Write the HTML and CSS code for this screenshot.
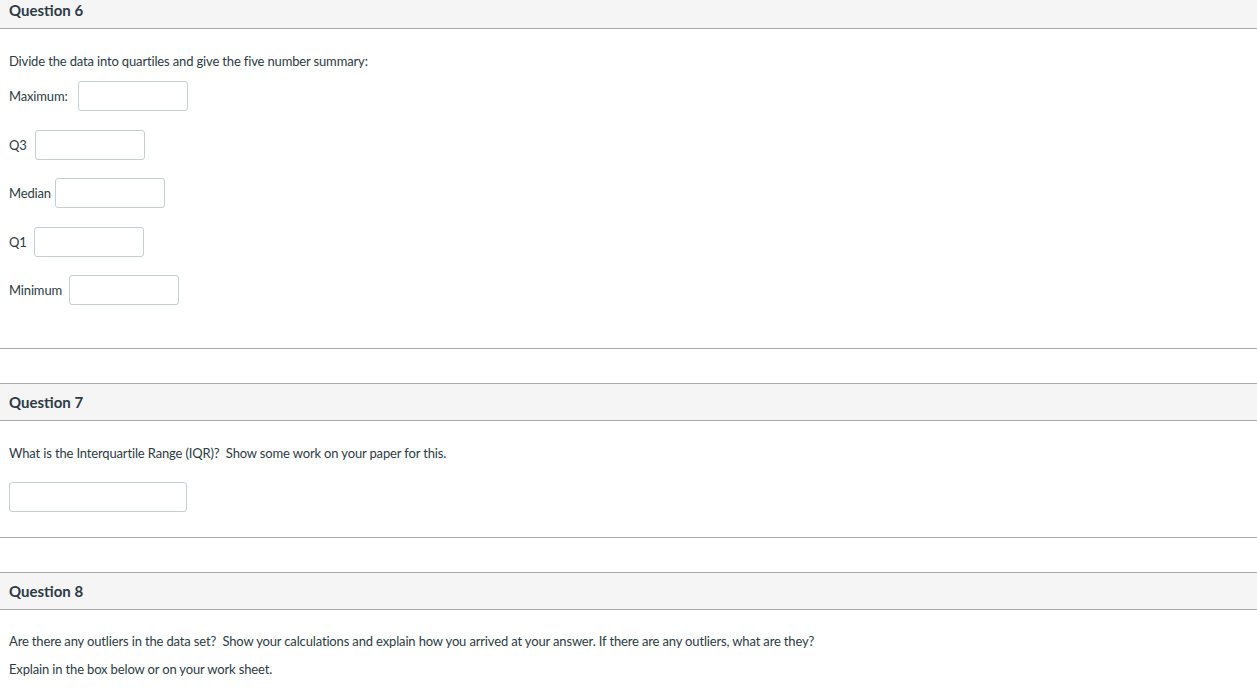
FILE: index.html
```html
<!DOCTYPE html>
<html>
<head>
<meta charset="utf-8">
<link rel="stylesheet" href="styles.css">
</head>
<body>
<div class="quiz">
  <div class="question q6">
    <div class="q-header">Question 6</div>
    <div class="q-body">
      <p>Divide the data into quartiles and give the five number summary:</p>
      <div class="rows">
        <p class="row">Maximum: <span class="box sp-10"></span></p>
        <p class="row">Q3 <span class="box sp-8"></span></p>
        <p class="row">Median <span class="box sp-4"></span></p>
        <p class="row">Q1 <span class="box sp-7"></span></p>
        <p class="row">Minimum <span class="box sp-7"></span></p>
      </div>
    </div>
  </div>
  <div class="question q7">
    <div class="q-header">Question 7</div>
    <div class="q-body">
      <p>What is the Interquartile Range (IQR)?&nbsp; Show some work on your paper for this.</p>
      <p class="answer"><span class="box wide"></span></p>
    </div>
  </div>
  <div class="question q8">
    <div class="q-header">Question 8</div>
    <div class="q-body">
      <p>Are there any outliers in the data set?&nbsp; Show your calculations and explain how you arrived at your answer. If there are any outliers, what are they?</p>
      <p>Explain in the box below or on your work sheet.</p>
    </div>
  </div>
</div>
</body>
</html>
```

FILE: styles.css
```css
html, body {
  margin: 0;
  padding: 0;
  background: #fff;
}
body {
  font-family: Lato, "Open Sans", sans-serif;
  color: #2d3b45;
  font-size: 13px;
  letter-spacing: -0.15px;
  overflow: hidden;
}
.quiz {
  margin-top: -9px;
}
.question {
  border-top: 1px solid #aaa;
  border-bottom: 1px solid #aaa;
  margin-bottom: 34px;
}
.q-header {
  background: #f5f5f5;
  border-bottom: 1px solid #aaa;
  height: 36px;
  line-height: 37px;
  padding: 0 9px;
  font-weight: bold;
  font-size: 15px;
  letter-spacing: 0;
}
.q-body {
  padding: 18px 9px 0;
}
.q-body p {
  margin: 0;
  line-height: 28px;
}
.q6 .q-body {
  padding-bottom: 43px;
}
.rows {
  display: flex;
  flex-direction: column;
  gap: 18.5px;
  margin-top: 6px;
}
.row {
  display: flex;
  align-items: center;
  height: 30px;
}
.box {
  display: inline-block;
  width: 108px;
  height: 28px;
  border: 1px solid #c7cdd1;
  border-radius: 3px;
  background: #fff;
}
.sp-10 { margin-left: 10px; }
.sp-8 { margin-left: 8px; }
.sp-7 { margin-left: 7px; }
.sp-4 { margin-left: 4px; }
.answer {
  display: flex;
  margin-top: 15px !important;
}
.q7 .q-body {
  padding-bottom: 25px;
}
.box.wide {
  width: 176px;
}
.q8 .q-body {
  padding-top: 17px;
  padding-bottom: 20px;
}
```
